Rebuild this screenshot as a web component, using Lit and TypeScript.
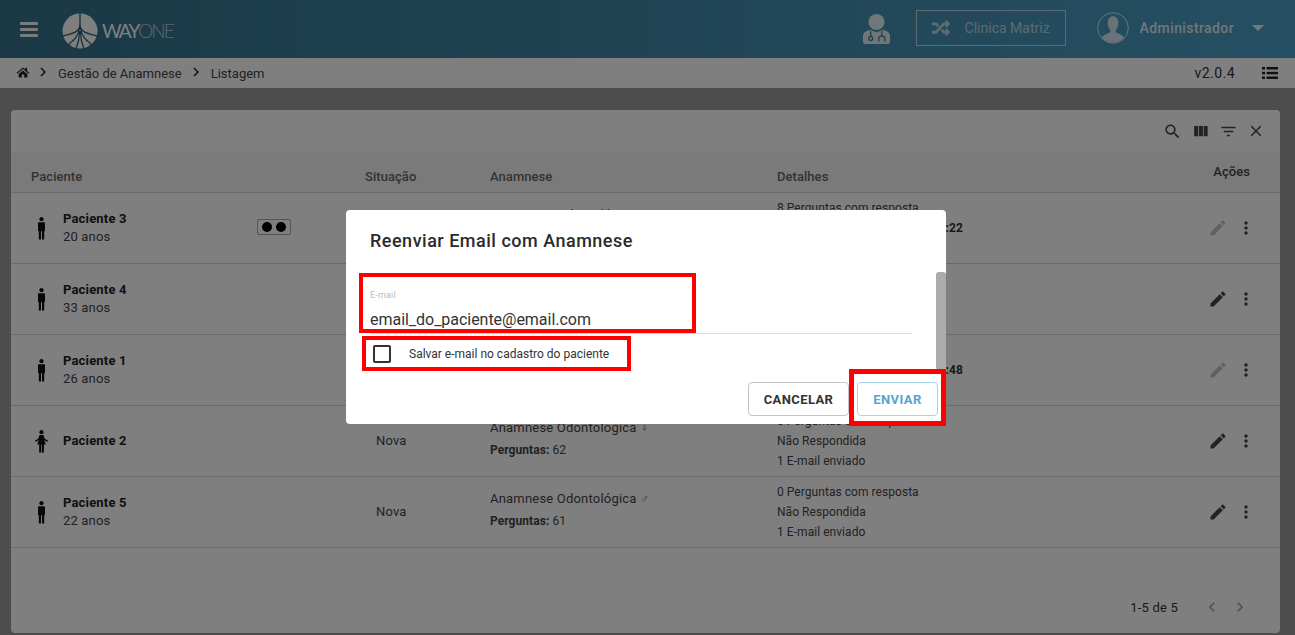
import { LitElement, html, css, svg } from "lit";
import { customElement } from "lit/decorators.js";

const P = {
  search: "M15.5 14h-.79l-.28-.27C15.41 12.59 16 11.11 16 9.5 16 5.91 13.09 3 9.5 3S3 5.91 3 9.5 5.91 16 9.5 16c1.61 0 3.09-.59 4.23-1.57l.27.28v.79l5 4.99L20.49 19l-4.99-5zm-6 0C7.01 14 5 11.99 5 9.5S7.01 5 9.5 5 14 7.01 14 9.5 11.99 14 9.5 14z",
  cols: "M10 18h5V5h-5v13zm-6 0h5V5H4v13zM16 5v13h5V5h-5z",
  filter: "M10 18h4v-2h-4v2zM3 6v2h18V6H3zm3 7h12v-2H6v2z",
  close: "M19 6.41L17.59 5 12 10.59 6.41 5 5 6.41 10.59 12 5 17.59 6.41 19 12 13.41 17.59 19 19 17.59 13.41 12z",
  edit: "M3 17.25V21h3.75L17.81 9.94l-3.75-3.75L3 17.25zM20.71 7.04c.39-.39.39-1.02 0-1.41l-2.34-2.34c-.39-.39-1.02-.39-1.41 0l-1.83 1.83 3.75 3.75 1.83-1.83z",
  more: "M12 8c1.1 0 2-.9 2-2s-.9-2-2-2-2 .9-2 2 .9 2 2 2zm0 2c-1.1 0-2 .9-2 2s.9 2 2 2 2-.9 2-2-.9-2-2-2zm0 6c-1.1 0-2 .9-2 2s.9 2 2 2 2-.9 2-2-.9-2-2-2z",
  left: "M15.41 7.41L14 6l-6 6 6 6 1.41-1.41L10.83 12z",
  right: "M10 6L8.59 7.41 13.17 12l-4.58 4.59L10 18l6-6z",
  home: "M12 4.2 1 13.4l1.3 1.5L12 6.9l9.7 8 1.3-1.5-4-3.3V4.5h-3v3.1L12 4.2zM4.5 15.6V21.5h5.5v-5.2h4v5.2h5.5v-5.9L12 9.3 4.5 15.6z",
  caret: "M0 0h12L6 6z",
};
const RANDOM = "M504.971 359.029c9.373 9.373 9.373 24.569 0 33.941l-80 79.984c-15.01 15.01-40.971 4.49-40.971-16.971V416h-58.785a12.004 12.004 0 0 1-8.773-3.812l-70.556-75.596 53.333-57.143L352 336h32v-39.981c0-21.438 25.943-31.998 40.971-16.971l80 79.981zM12 176h84l52.781 56.551 53.333-57.143-70.556-75.596A11.999 11.999 0 0 0 122.785 96H12c-6.627 0-12 5.373-12 12v56c0 6.627 5.373 12 12 12zm372 0v39.984c0 21.46 25.961 31.98 40.971 16.971l80-79.984c9.373-9.373 9.373-24.569 0-33.941l-80-79.981C409.943 24.021 384 34.582 384 56.019V96h-58.785a12.004 12.004 0 0 0-8.773 3.812L96 336H12c-6.627 0-12 5.373-12 12v56c0 6.627 5.373 12 12 12h110.785c3.326 0 6.503-1.381 8.773-3.812L352 176h32z";

const icon = (d: string, size = 20, cls = "") =>
  html`<svg class=${cls} width=${size} height=${size} viewBox="0 0 24 24" fill="currentColor"><path d=${d}></path></svg>`;

const male = html`<svg class="person" width="9" height="23" viewBox="0 0 9 23" fill="currentColor">
  <circle cx="4.5" cy="2.2" r="2.1"></circle><rect x="1" y="5.2" width="7" height="9" rx=".8"></rect>
  <rect x="1.8" y="13.5" width="2.2" height="9"></rect><rect x="5" y="13.5" width="2.2" height="9"></rect></svg>`;

const female = html`<svg class="person" width="13" height="23" viewBox="0 0 13 23" fill="currentColor">
  <circle cx="6.5" cy="2.2" r="2.1"></circle><path d="M4.5 5h4l1 3.2 2.6 2.2.8-.9.1 1.3-1 1.1-2.700-2 1.500 4.600H2.200l1.500-4.600-2.700 2-1-1.100.1-1.300.8.9 2.600-2.200z"></path>
  <rect x="4.2" y="14" width="2" height="8.6"></rect><rect x="6.9" y="14" width="2" height="8.6"></rect></svg>`;

type Row = {
  name: string; age?: string; female?: boolean; chip?: boolean; sit: string; sex: string; q: string;
  d: string[]; bold?: boolean; muted?: boolean;
};

const rows: Row[] = [
  { name: "Paciente 3", age: "20 anos", chip: true, sit: "Respondida", sex: "♂", q: "61", d: ["8 Perguntas com resposta", "Respondida em 12/03/2019 15:22", "1 E-mail enviado"], bold: true, muted: true },
  { name: "Paciente 4", age: "33 anos", sit: "Nova", sex: "♂", q: "61", d: ["0 Perguntas com resposta", "Não Respondida", "1 E-mail enviado"] },
  { name: "Paciente 1", age: "26 anos", sit: "Respondida", sex: "♂", q: "61", d: ["8 Perguntas com resposta", "Respondida em 12/03/2019 14:48", "1 E-mail enviado"], bold: true, muted: true },
  { name: "Paciente 2", female: true, sit: "Nova", sex: "♀", q: "62", d: ["0 Perguntas com resposta", "Não Respondida", "1 E-mail enviado"] },
  { name: "Paciente 5", age: "22 anos", sit: "Nova", sex: "♂", q: "61", d: ["0 Perguntas com resposta", "Não Respondida", "1 E-mail enviado"] },
];

@customElement("app-root")
export class AppRoot extends LitElement {
  static styles = css`
    :host { display: block; position: relative; width: 1295px; height: 635px; overflow: hidden;
      background: #9a9a9a; font-family: Roboto, "Liberation Sans", sans-serif; color: #333; letter-spacing: .01071em; }
    svg { display: block; flex: none; }
    .top { height: 58px; display: flex; align-items: center; color: #fff;
      background: linear-gradient(90deg, #35718c 0%, #3c7f9d 30%, #4c9fc7 100%); }
    .menu { margin-left: 20px; width: 18px; display: flex; flex-direction: column; gap: 3px; }
    .menu i { display: block; height: 3px; background: #fff; border-radius: 1px; opacity: .95; }
    .logo { margin-left: 24px; margin-top: 3px; }
    .brand { margin-left: 4px; font-family: Lato, sans-serif; font-size: 19px; letter-spacing: -2px; line-height: 24px; margin-top: 4px; color: #fff; font-weight: 400; }
    .brand span { font-weight: 300; opacity: .62; }
    .spacer { flex: 1; }
    .doc { margin-right: 26px; margin-top: -1px; opacity: .85; }
    .unit { width: 150px; height: 36px; box-sizing: border-box; border: 1px solid rgba(255,255,255,.62); display: flex; align-items: center;
      padding-left: 15px; gap: 15px; font-size: 14px; color: rgba(255,255,255,.62); letter-spacing: 0; margin-right: 31px; margin-top: -2px; }
    .avatar { margin-right: 11px; margin-top: -2px; opacity: .75; }
    .admin { font-size: 14px; font-weight: 500; color: rgba(255,255,255,.85); letter-spacing: .4px; margin-top: -2px; }
    .caret { margin-left: 18px; margin-right: 31px; margin-top: -2px; opacity: .85; }
    .crumb { height: 30px; background: #fff; display: flex; align-items: center; font-size: 13px; color: #444; letter-spacing: 0; }
    .crumb svg { color: #222; }
    .crumb .home { margin-left: 16px; margin-top: -3px; }
    .crumb .chev.a { margin: -2px 6px 0 4px; }
    .crumb .chev.b { margin: -2px 6px 0 5px; }
    .ver { margin-left: auto; margin-right: 27px; font-size: 14px; color: #333; letter-spacing: .45px; }
    .lst { margin-right: 17px; }
    .card { position: absolute; left: 11px; top: 110px; width: 1269px; height: 523px; background: #fff; border-radius: 4px;
      display: flex; flex-direction: column; }
    .tools { height: 42px; display: flex; align-items: center; justify-content: flex-end; padding-right: 10px; color: #444; }
    .tools span { width: 28px; display: flex; justify-content: center; }
    .cols { display: grid; grid-template-columns: 334px 125px 287px 1fr 90px; padding-left: 20px; box-sizing: border-box; }
    .thead { height: 41px; background: #f5f5f5; border-bottom: 1px solid #d4d4d4; font-size: 13px; font-weight: 500; color: #666; align-items: end; }
    .thead > div { padding-bottom: 8px; letter-spacing: .05px; }
    .thead .act { justify-self: end; margin-right: 6px; padding: 0 24px 13px 0; letter-spacing: .05px; }
    .row { height: 71px; border-bottom: 1px solid #d4d4d4; align-items: center; font-size: 13px; color: #444; }
    .pat { display: flex; align-items: center; }
    .ico { width: 20px; display: flex; justify-content: center; color: #111; margin-right: 12px; }
    .who { width: 194px; line-height: 18px; }
    .who b { display: block; font-weight: 700; color: #222; font-size: 13px; }
    .chip { width: 34px; height: 16px; box-sizing: border-box; border: 1px solid #aaa; border-radius: 2px; display: flex; align-items: center; justify-content: center; gap: 4px; margin-bottom: 2px; }
    .chip i { width: 10px; height: 10px; border-radius: 50%; background: #000; }
    .sit { padding: 0 0 2px 11px; }
    .ana { line-height: 22px; padding-bottom: 5px; letter-spacing: .2px; }
    .ana .sex { font-size: 12px; color: #666; }
    .ana p { margin: 0; font-size: 12px; color: #444; letter-spacing: .06px; }
    .ana p b { font-weight: 700; }
    .det { font-size: 12px; line-height: 20px; letter-spacing: .05px; }
    .det b { font-weight: 700; font-size: 12px; color: #333; }
    .act { display: flex; justify-content: flex-end; gap: 8px; padding-right: 24px; color: #444; }
    .act .off { opacity: .32; }
    .foot { flex: 1; display: flex; align-items: center; justify-content: flex-end; font-size: 13px; color: #333; padding-right: 30px; padding-top: 33px; box-sizing: border-box; letter-spacing: .2px; }
    .foot svg { color: #aaa; }
    .foot .l { margin-left: 24px; margin-right: 8px; }
    .scrim { position: absolute; inset: 0; background: rgba(0,0,0,.5); }
    .modal { position: absolute; left: 346px; top: 210px; width: 600px; height: 214px; background: #fff; border-radius: 4px; display: flex; flex-direction: column; }
    .mtitle { height: 62px; box-sizing: border-box; padding: 20px 24px 0; font-size: 18px; font-weight: 500; color: #2b2b2b; line-height: 22px; letter-spacing: .5px; }
    .field { margin: 0 34px 0 24px; padding-top: 17px; border-bottom: 1px solid #ddd; height: 62px; box-sizing: border-box; }
    .field label { display: block; font-size: 9px; line-height: 12px; color: #bbb; }
    .field div { font-size: 16px; line-height: 22px; margin-top: 8px; color: #333; letter-spacing: -.03px; }
    .check { height: 40px; display: flex; align-items: center; padding-left: 27px; font-size: 12px; color: #333; letter-spacing: 0; }
    .box { width: 18px; height: 18px; box-sizing: border-box; border: 2px solid #333; border-radius: 2px; margin-right: 18px; }
    .actions { flex: 1; display: flex; justify-content: flex-end; align-items: flex-start; gap: 8px; padding: 8px 8px 0 0; }
    .btn { height: 34px; box-sizing: border-box; border-radius: 4px; border: 1px solid #c4c4c4; background: #fff; font: 700 13px Roboto, sans-serif; letter-spacing: .4px; color: #333; display: flex; align-items: center; justify-content: center; }
    .btn.c { width: 101px; }
    .btn.e { width: 81px; border-color: #a6d3e6; color: #55a6cf; }
    .bar { position: absolute; right: 0; top: 62px; width: 10px; height: 98px; background: #ababab; border-radius: 3px; }
    .red { position: absolute; box-sizing: border-box; border: 4px solid #f00; }
    .r1 { left: 359px; top: 273px; width: 337px; height: 60px; }
    .r2 { left: 362px; top: 336px; width: 269px; height: 35px; }
    .r3 { left: 849px; top: 369px; width: 97px; height: 57px; border-width: 5px; }
  `;

  private logo() {
    const c = "#2c5f78";
    return html`<svg class="logo" width="36" height="36" viewBox="0 0 36 36">
      <circle cx="18" cy="18" r="17.5" fill="#fff"></circle>
      <g fill="none" stroke=${c} stroke-width="1.3">
        ${svg`<path d="M18 0V16"></path>
        <path d="M18 12C18 19 10 21 0 23"></path><path d="M18 12C18 19 26 21 36 23"></path>
        <path d="M17.4 15C17 23 12 27 6 32"></path><path d="M18.6 15C19 23 24 27 30 32"></path>
        <path d="M17.6 18C17.6 26 16 31 14 36"></path><path d="M18.4 18C18.4 26 20 31 22 36"></path>`}
      </g></svg>`;
  }

  private doctor() {
    return html`<svg class="doc" width="27" height="30" viewBox="0 0 27 30">
      <circle cx="13.5" cy="8" r="8" fill="#fff"></circle>
      <path d="M0 30v-7.500c0-4 3-6 7.500-6.500l6 2.500 6-2.500c4.500.5 7.500 2.500 7.500 6.500V28a2 2 0 0 1-2 2H2a2 2 0 0 1-2-2z" fill="#fff"></path>
      <g fill="none" stroke="#3f8aaa" stroke-width="1.400">
        <circle cx="7.700" cy="24.500" r="2"></circle><path d="M7.700 22.500V17"></path>
        <path d="M15.800 27.500v-2.500a3 3 0 0 1 6 0v2.500"></path><path d="M18.800 22V17"></path>
      </g></svg>`;
  }

  private avatar() {
    return html`<svg class="avatar" width="32" height="32" viewBox="0 0 33 33">
      <defs><clipPath id="av"><circle cx="16.500" cy="16.500" r="15.200"></circle></clipPath></defs>
      <circle cx="16.500" cy="16.500" r="15.800" fill="none" stroke="#fff" stroke-width="1"></circle>
      <g clip-path="url(#av)" fill="#fff"><path d="M11 11c0-4 2.500-6.500 5.500-6.500S22 7 22 11c0 3-1 5.500-2.500 7.500v2.500c2 1.500 8 2.500 8.500 6v6H5v-6c.5-3.500 6.500-4.500 8.500-6v-2.500C12 16.500 11 14 11 11z"></path></g>
    </svg>`;
  }

  private renderRow(r: Row) {
    return html`<div class="cols row">
      <div class="pat">
        <div class="ico">${r.female ? female : male}</div>
        <div class="who"><b>${r.name}</b>${r.age ?? ""}</div>
        ${r.chip ? html`<div class="chip"><i></i><i></i></div>` : ""}
      </div>
      <div class="sit">${r.sit}</div>
      <div class="ana">Anamnese Odontológica <span class="sex">${r.sex}</span><p><b>Perguntas:</b> ${r.q}</p></div>
      <div class="det">
        <div>${r.d[0]}</div>
        <div>${r.bold ? html`<b>${r.d[1]}</b>` : r.d[1]}</div>
        <div>${r.d[2]}</div>
      </div>
      <div class="act">${icon(P.edit, 20, r.muted ? "off" : "")}${icon(P.more, 20)}</div>
    </div>`;
  }

  render() {
    return html`
      <div class="top">
        <div class="menu"><i></i><i></i><i></i></div>
        ${this.logo()}
        <div class="brand">WAY<span>ONE</span></div>
        <div class="spacer"></div>
        ${this.doctor()}
        <div class="unit">
          <svg width="18" height="18" viewBox="0 0 512 512" fill="currentColor"><path d=${RANDOM}></path></svg>
          <span>Clinica Matriz</span>
        </div>
        ${this.avatar()}
        <div class="admin">Administrador</div>
        <svg class="caret" width="12" height="6" viewBox="0 0 12 6" fill="#fff"><path d=${P.caret}></path></svg>
      </div>
      <div class="crumb">
        ${icon(P.home, 14, "home")}
        ${icon(P.right, 18, "chev a")}<span>Gestão de Anamnese</span>
        ${icon(P.right, 18, "chev b")}<span>Listagem</span>
        <span class="ver">v2.0.4</span>
        <svg class="lst" width="16" height="14" viewBox="0 0 16 14" fill="#222">
          <rect y="1" width="3" height="2.500"></rect><rect x="4.500" y="1" width="11.500" height="2.500"></rect>
          <rect y="5.800" width="3" height="2.500"></rect><rect x="4.500" y="5.800" width="11.500" height="2.500"></rect>
          <rect y="10.500" width="3" height="2.500"></rect><rect x="4.500" y="10.500" width="11.500" height="2.500"></rect>
        </svg>
      </div>
      <div class="card">
        <div class="tools">
          <span>${icon(P.search, 19)}</span><span>${icon(P.cols, 19)}</span><span>${icon(P.filter, 19)}</span><span>${icon(P.close, 18)}</span>
        </div>
        <div class="cols thead">
          <div>Paciente</div><div>Situação</div><div>Anamnese</div><div>Detalhes</div><div class="act">Ações</div>
        </div>
        ${rows.map((r) => this.renderRow(r))}
        <div class="foot">
          <span>1-5 de 5</span>
          ${icon(P.left, 20, "l")}${icon(P.right, 20)}
        </div>
      </div>
      <div class="scrim"></div>
      <div class="modal">
        <div class="mtitle">Reenviar Email com Anamnese</div>
        <div class="field"><label>E-mail</label><div>email_do_paciente@email.com</div></div>
        <div class="check"><span class="box"></span>Salvar e-mail no cadastro do paciente</div>
        <div class="actions"><div class="btn c">CANCELAR</div><div class="btn e">ENVIAR</div></div>
        <div class="bar"></div>
      </div>
      <div class="red r1"></div><div class="red r2"></div><div class="red r3"></div>
    `;
  }
}
